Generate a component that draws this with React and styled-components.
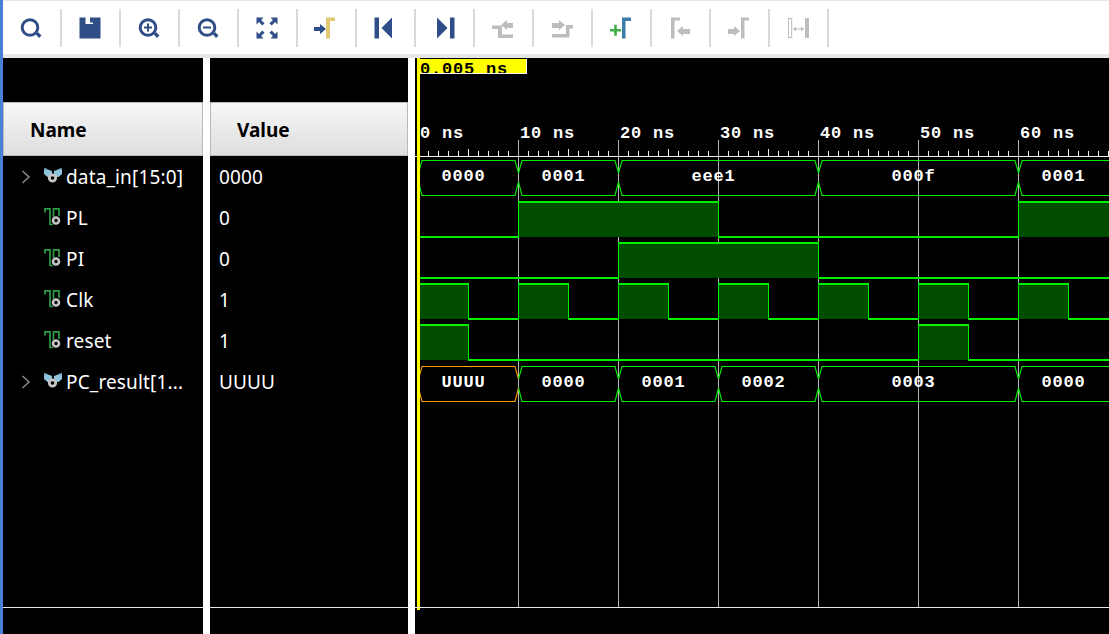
import React from 'react';
import styled, { createGlobalStyle } from 'styled-components';

const GlobalStyle = createGlobalStyle`
  html, body {
    margin: 0;
    height: 100%;
    background: #ffffff;
    overflow: hidden;
  }
  #root {
    height: 100%;
  }
`;

const Page = styled.div`
  height: 100vh;
  display: flex;
  flex-direction: column;
  box-sizing: border-box;
  border-left: 3px solid #4a7fd8;
  background: #ffffff;
`;

const Toolbar = styled.div`
  height: 58px;
  flex: none;
  box-sizing: border-box;
  display: flex;
  align-items: center;
  background: #ffffff;
  border-top: 1px solid #e6e6e6;
  border-bottom: 4px solid #e6e6e6;
`;

const ToolButton = styled.div`
  width: 59px;
  height: 38px;
  flex: none;
  box-sizing: border-box;
  border-right: 2px solid #d9d9d9;
  padding-right: 1px;
  display: flex;
  align-items: center;
  justify-content: center;
`;

const Main = styled.div`
  flex: 1;
  min-height: 0;
  display: flex;
  gap: 7px;
`;

const Pane = styled.div`
  width: ${(props) => props.width}px;
  flex: none;
  display: flex;
  flex-direction: column;
  background: #000000;
`;

const HeaderGap = styled.div`
  height: 44px;
  flex: none;
`;

const Header = styled.div`
  height: 54px;
  flex: none;
  box-sizing: border-box;
  display: flex;
  align-items: center;
  padding-left: ${(props) => props.indent}px;
  padding-top: 1px;
  border: 1px solid #b9b9b9;
  background: linear-gradient(#f7f7f7, #dedede);
  color: #000000;
  font-family: 'Noto Sans', 'Liberation Sans', sans-serif;
  font-weight: 700;
  font-size: 19px;
`;

const Rows = styled.div`
  flex: 1;
  min-height: 0;
`;

const Row = styled.div`
  height: 41px;
  display: flex;
  align-items: center;
  color: #ffffff;
  font-family: 'Noto Sans', 'Liberation Sans', sans-serif;
  font-size: 19px;
  letter-spacing: 0.15px;
  white-space: nowrap;
  padding-left: ${(props) => props.indent || 0}px;
`;

const Expander = styled.div`
  width: 25px;
  flex: none;
  display: flex;
  padding-left: 2px;
  box-sizing: border-box;
`;

const Footer = styled.div`
  height: 27px;
  flex: none;
  border-top: 1px solid #e8e8e8;
  box-sizing: border-box;
`;

const WavePane = styled.div`
  flex: 1;
  min-width: 0;
  background: #000000;
`;

const WaveSvg = styled.svg`
  display: block;
  width: 100%;
  height: 100%;
`;

const WaveLabel = styled.text`
  fill: ${(props) => props.color || '#ffffff'};
  font-family: 'Liberation Mono', monospace;
  font-weight: 700;
  font-size: 17px;
  letter-spacing: 0.8px;
  text-anchor: ${(props) => props.anchor || 'start'};
`;

const navy = '#2f4d86';
const grey = '#bdbdbd';

function Icon({ children }) {
  return (
    <svg width="24" height="24" viewBox="0 0 24 24">
      {children}
    </svg>
  );
}

function Lens({ children }) {
  return (
    <Icon>
      <circle cx="11" cy="11.500" r="7.800" fill="none" stroke={navy} strokeWidth="3" />
      <path d="M16.500 18 l2.800-1.800 3.200 3.200-2.500 2.600z" fill={navy} />
      {children}
    </Icon>
  );
}

const tools = [
  <Lens />,
  <Icon>
    <path d="M1.500 1.500H7.500V8H15V1.500H22.500V22.500H1.500Z" fill={navy} />
    <rect x="12" y="1.500" width="3" height="5" fill={navy} />
  </Icon>,
  <Lens>
    <path d="M11 7.500v8M7 11.500h8" stroke={navy} strokeWidth="2" />
  </Lens>,
  <Lens>
    <path d="M7 11.500h8" stroke={navy} strokeWidth="2" />
  </Lens>,
  <Icon>
    <g fill={navy}>
      <path d="M1.500 1.500h7l-2.400 2.400 3.400 3.400-2.200 2.200-3.400-3.400-2.400 2.400z" />
      <path d="M22.500 1.500h-7l2.400 2.400-3.400 3.400 2.200 2.200 3.400-3.400 2.400 2.400z" />
      <path d="M1.500 22.500h7l-2.400-2.400 3.400-3.400-2.200-2.200-3.400 3.400-2.400-2.400z" />
      <path d="M22.500 22.500h-7l2.400-2.400-3.400-3.400 2.200-2.200 3.400 3.400 2.400-2.400z" />
    </g>
  </Icon>,
  <Icon>
    <path d="M0 11h6V8l6 5-6 5v-3H0z" fill={navy} />
    <path d="M12 22.500V1.500h9v3.500h-5v17.500z" fill="#e2c870" />
  </Icon>,
  <Icon>
    <rect x="1.500" y="1.500" width="4.500" height="21" fill={navy} />
    <path d="M19 1.500V22.500L8.500 12z" fill={navy} />
  </Icon>,
  <Icon>
    <path d="M5 1.500V22.500L15.500 12z" fill={navy} />
    <rect x="18" y="1.500" width="4.500" height="21" fill={navy} />
  </Icon>,
  <Icon>
    <path d="M1 9.500h10v9h11v3.500H7v-9H1z" fill={grey} />
    <path d="M10 9l6-5v3h6v5h-6v2z" fill={grey} />
  </Icon>,
  <Icon>
    <path d="M2 18h14v-9h7v3.500h-3.500v9H2z" fill={grey} />
    <path d="M2 7h7V4l6 5-6 5v-2H2z" fill={grey} />
  </Icon>,
  <Icon>
    <path d="M1 13h4.200V8.800h2.600V13H12v2.600H7.800v4.200H5.200v-4.200H1z" fill="#3fae49" />
    <path d="M13 22.500V1.500h9v3.500h-5.500v17.500z" fill="#3b7ca8" />
  </Icon>,
  <Icon>
    <path d="M3 22.500V1.500h9v3h-5.500v18z" fill={grey} />
    <path d="M9 15l6-5v3h7v5h-7v2z" fill={grey} />
  </Icon>,
  <Icon>
    <path d="M1 13h6v-3l6 5-6 5v-2H1z" fill={grey} />
    <path d="M14 22.500V1.500h8v3h-4.500v18z" fill={grey} />
  </Icon>,
  <Icon>
    <rect x="2.500" y="2.500" width="3.200" height="19" fill="none" stroke={grey} strokeWidth="1" />
    <rect x="19" y="2" width="4" height="20" fill={grey} />
    <path d="M7 13h11" stroke={grey} strokeWidth="1" />
    <path d="M7 13l3-2.500v5zM18 13l-3-2.500v5z" fill={grey} />
  </Icon>,
];

function Chevron() {
  return (
    <svg width="10" height="14" viewBox="0 0 10 14">
      <path d="M1.500 1 L8 7 L1.500 13" fill="none" stroke="#8a8a8a" strokeWidth="1.500" />
    </svg>
  );
}

function BusIcon() {
  return (
    <svg width="22" height="20" viewBox="0 0 22 20">
      <path d="M0 1L8 4v6H3.500L0 7zM18 1L10 4v6h4.500L18 7z" fill="#8fc3dc" />
      <path d="M0 1h2.500v1.500H0zM15.500 1H18v1.500h-2.500z" fill="#5a7f95" />
      <circle cx="8.500" cy="11" r="3.200" fill="#000000" stroke="#c4c4c4" strokeWidth="2.800" />
    </svg>
  );
}

function BitIcon() {
  return (
    <svg width="22" height="20" viewBox="0 0 22 20">
      <path d="M1 4.500V0.800H6V16.500H9M9.500 9V0.800H15V8" fill="none" stroke="#2e9c46" strokeWidth="1.700" />
      <circle cx="12" cy="12.500" r="3" fill="#000000" stroke="#c4c4c4" strokeWidth="2.600" />
    </svg>
  );
}

const signals = [
  { name: 'data_in[15:0]', value: '0000', bus: true },
  { name: 'PL', value: '0' },
  { name: 'PI', value: '0' },
  { name: 'Clk', value: '1' },
  { name: 'reset', value: '1' },
  { name: 'PC_result[1...', value: 'UUUU', bus: true },
];

const X0 = 418.5;
const ns = (t) => X0 + t * 10;
const GREEN = '#00f000';

function BusWave({ top, segments }) {
  const high = top + 0.5;
  const low = top + 35.5;
  return segments.map((s) => {
    const a = ns(s.from);
    const b = ns(s.to);
    const color = s.color || GREEN;
    return (
      <g key={s.from}>
        <path
          d={`M${a} ${top + 13}L${a + 3.5} ${high}H${b - 3.5}L${b} ${top + 13}`}
          fill="none"
          stroke={color}
          strokeWidth="1.100"
          shapeRendering="geometricPrecision"
        />
        <path
          d={`M${a} ${top + 22}L${a + 3.5} ${low}H${b - 3.5}L${b} ${top + 22}`}
          fill="none"
          stroke={color}
          strokeWidth="1.100"
          shapeRendering="geometricPrecision"
        />
        <WaveLabel x={(a + b) / 2 - 5} y={top + 21} anchor="middle">
          {s.label}
        </WaveLabel>
      </g>
    );
  });
}

function BitWave({ top, highs }) {
  const bottom = top + 35;
  let d = `M${X0} ${bottom}`;
  highs.forEach(([from, to]) => {
    d += `H${ns(from)}V${top}H${ns(to)}V${bottom}`;
  });
  d += 'H1120';
  return (
    <g>
      {highs.map(([from, to]) => (
        <rect key={from} x={ns(from)} y={top} width={(to - from) * 10} height={35} fill="#004d00" />
      ))}
      <path d={d} fill="none" stroke={GREEN} strokeWidth="1.200" />
    </g>
  );
}

const marks = [0, 10, 20, 30, 40, 50, 60];

function Waveform() {
  const ticks = [];
  for (let x = 0; x < 70; x += 1) {
    if (x % 10 !== 0) {
      const tall = x % 10 === 5;
      ticks.push(`M${ns(x)} 156V${tall ? 149 : 151}`);
    }
  }
  return (
    <WaveSvg viewBox="415 58 694 576" shapeRendering="crispEdges">
      {marks.slice(1).map((t) => (
        <path key={t} d={`M${ns(t)} 140V607.500`} stroke="#b4b4b4" strokeWidth="1" />
      ))}
      <path d="M415 156.500H1109" stroke="#f0f0f0" strokeWidth="1" />
      <path d={ticks.join('')} stroke="#f0f0f0" strokeWidth="1" />
      {marks.map((t) => (
        <WaveLabel key={t} x={ns(t) + 1.5} y={138}>
          {t} ns
        </WaveLabel>
      ))}

      <BusWave
        top={160}
        segments={[
          { from: 0, to: 10, label: '0000' },
          { from: 10, to: 20, label: '0001' },
          { from: 20, to: 40, label: 'eee1' },
          { from: 40, to: 60, label: '000f' },
          { from: 60, to: 70, label: '0001' },
        ]}
      />
      <BitWave top={202} highs={[[10, 30], [60, 72]]} />
      <BitWave top={243} highs={[[20, 40]]} />
      <BitWave top={284} highs={[[0, 5], [10, 15], [20, 25], [30, 35], [40, 45], [50, 55], [60, 65]]} />
      <BitWave top={325} highs={[[0, 5], [50, 55]]} />
      <BusWave
        top={366}
        segments={[
          { from: 0, to: 10, label: 'UUUU', color: '#ff9c00' },
          { from: 10, to: 20, label: '0000' },
          { from: 20, to: 30, label: '0001' },
          { from: 30, to: 40, label: '0002' },
          { from: 40, to: 60, label: '0003' },
          { from: 60, to: 70, label: '0000' },
        ]}
      />

      <rect x="417" y="58" width="3" height="552" fill="#ffff00" />
      <rect x="417" y="59" width="109" height="14" fill="#ffff00" />
      <path d="M420 73.500H526.500V59" fill="none" stroke="#f4f4f4" strokeWidth="1" />
      <svg x="420" y="59" width="106" height="14" viewBox="420 59 106 14">
        <WaveLabel x={420} y={74} color="#000000">
          0.005 ns
        </WaveLabel>
      </svg>
      <path d="M415 607.500H1109" stroke="#e8e8e8" strokeWidth="1" />
    </WaveSvg>
  );
}

export default function App() {
  return (
    <Page>
      <GlobalStyle />
      <Toolbar>
        {tools.map((tool, i) => (
          <ToolButton key={i}>{tool}</ToolButton>
        ))}
      </Toolbar>
      <Main>
        <Pane width={200}>
          <HeaderGap />
          <Header indent={26}>Name</Header>
          <Rows>
            {signals.map((s) => (
              <Row key={s.name} indent={16}>
                <Expander>{s.bus ? <Chevron /> : null}</Expander>
                {s.bus ? <BusIcon /> : <BitIcon />}
                {s.name}
              </Row>
            ))}
          </Rows>
          <Footer />
        </Pane>
        <Pane width={198}>
          <HeaderGap />
          <Header indent={26}>Value</Header>
          <Rows>
            {signals.map((s) => (
              <Row key={s.name} indent={9}>
                {s.value}
              </Row>
            ))}
          </Rows>
          <Footer />
        </Pane>
        <WavePane>
          <Waveform />
        </WavePane>
      </Main>
    </Page>
  );
}
